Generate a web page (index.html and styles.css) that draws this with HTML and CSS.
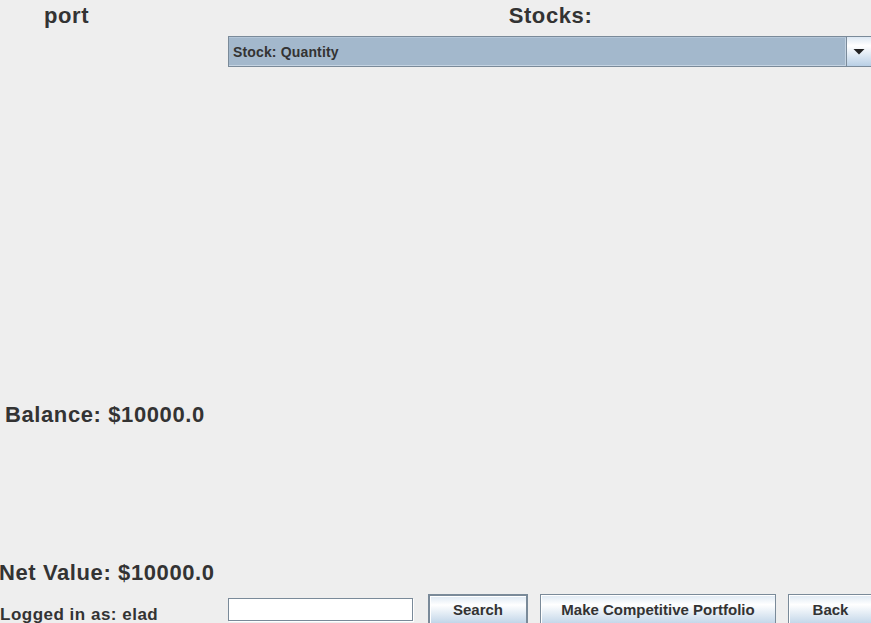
FILE: index.html
```html
<!DOCTYPE html>
<html>
<head>
<meta charset="utf-8">
<link rel="stylesheet" href="styles.css">
</head>
<body>
<div class="frame">
  <div class="left">
    <div class="lbl big port">port</div>
    <div class="lbl big balance">Balance: $10000.0</div>
    <div class="lbl big net">Net Value: $10000.0</div>
    <div class="lbl small logged">Logged in as: elad</div>
  </div>
  <div class="right">
    <div class="lbl big title">Stocks:</div>
    <div class="combo">
      <div class="combo-display">Stock: Quantity</div>
      <div class="combo-arrow">
        <svg width="12" height="6" viewBox="0 0 12 6"><polygon points="0.5,0 11.5,0 6,5.5" fill="#222"/></svg>
      </div>
    </div>
    <div class="bottom">
      <div class="field"></div>
      <div class="btn default search">Search</div>
      <div class="btn make">Make Competitive Portfolio</div>
      <div class="btn back">Back</div>
    </div>
  </div>
</div>
</body>
</html>
```
FILE: styles.css
```css
html, body {
  margin: 0;
  padding: 0;
  overflow: hidden;
  background: #eeeeee;
}
.frame {
  display: grid;
  grid-template-columns: 228px 647px;
  height: 623px;
  overflow: hidden;
  font-family: "Liberation Sans", Arial, sans-serif;
  color: #333333;
  font-weight: bold;
}
.left {
  display: flex;
  flex-direction: column;
  min-width: 0;
}
.lbl {
  white-space: nowrap;
}
.big {
  font-size: 22px;
  line-height: 26px;
  height: 26px;
  letter-spacing: 0.6px;
}
.small {
  font-size: 17px;
  line-height: 20px;
  height: 20px;
  letter-spacing: 0.5px;
}
.port {
  margin-top: 3px;
  padding-left: 44px;
}
.balance {
  margin-top: 373px;
  padding-left: 5px;
}
.net {
  margin-top: 132px;
  margin-left: -1px;
}
.logged {
  margin-top: 19px;
  padding-left: 0;
}
.right {
  display: flex;
  flex-direction: column;
  min-width: 0;
}
.title {
  margin-top: 3px;
  text-align: center;
  padding-right: 2px;
}
.combo {
  margin-top: 7px;
  height: 31px;
  box-sizing: border-box;
  border: 1px solid #7a8a99;
  display: flex;
  width: 645px;
}
.combo-display {
  flex: 1;
  background: #a3b8cc;
  box-shadow: inset 0 1px 0 #b4c6d8, inset -1px -1px 0 #c4d3e2;
  font-size: 14px;
  line-height: 29px;
  padding-top: 1px;
  height: 29px;
  box-sizing: border-box;
  padding-left: 4px;
  letter-spacing: 0.15px;
  white-space: nowrap;
}
.combo-arrow {
  border-left: 1px solid #7a8a99;
  background: linear-gradient(to bottom, #dde8f3 0%, #ffffff 30%, #b8cfe5 100%);
  display: flex;
  align-items: center;
  padding-left: 6px;
  box-sizing: border-box;
  width: 26px;
}
.combo-arrow svg {
  display: block;
  margin-top: 1px;
}
.bottom {
  margin-top: auto;
  height: 31px;
  display: flex;
  align-items: flex-start;
}
.field {
  margin-top: 4px;
  width: 185px;
  height: 23px;
  box-sizing: border-box;
  background: #ffffff;
  border: 1px solid #7a8a99;
  box-shadow: 1px 1px 0 #ffffff;
}
.btn {
  height: 34px;
  box-sizing: border-box;
  border: 1px solid #7a8a99;
  background: linear-gradient(to bottom, #dde8f3 0%, #ffffff 30%, #b8cfe5 100%);
  box-shadow: inset 1px 1px 0 #ffffff;
  font-size: 15px;
  line-height: 30px;
  text-align: center;
  white-space: nowrap;
  flex: none;
}
.btn.default {
  border-width: 2px;
  line-height: 28px;
}
.search {
  margin-left: 15px;
  width: 100px;
}
.make {
  margin-left: 12px;
  width: 236px;
}
.back {
  margin-left: 12px;
  width: 85px;
}
```
